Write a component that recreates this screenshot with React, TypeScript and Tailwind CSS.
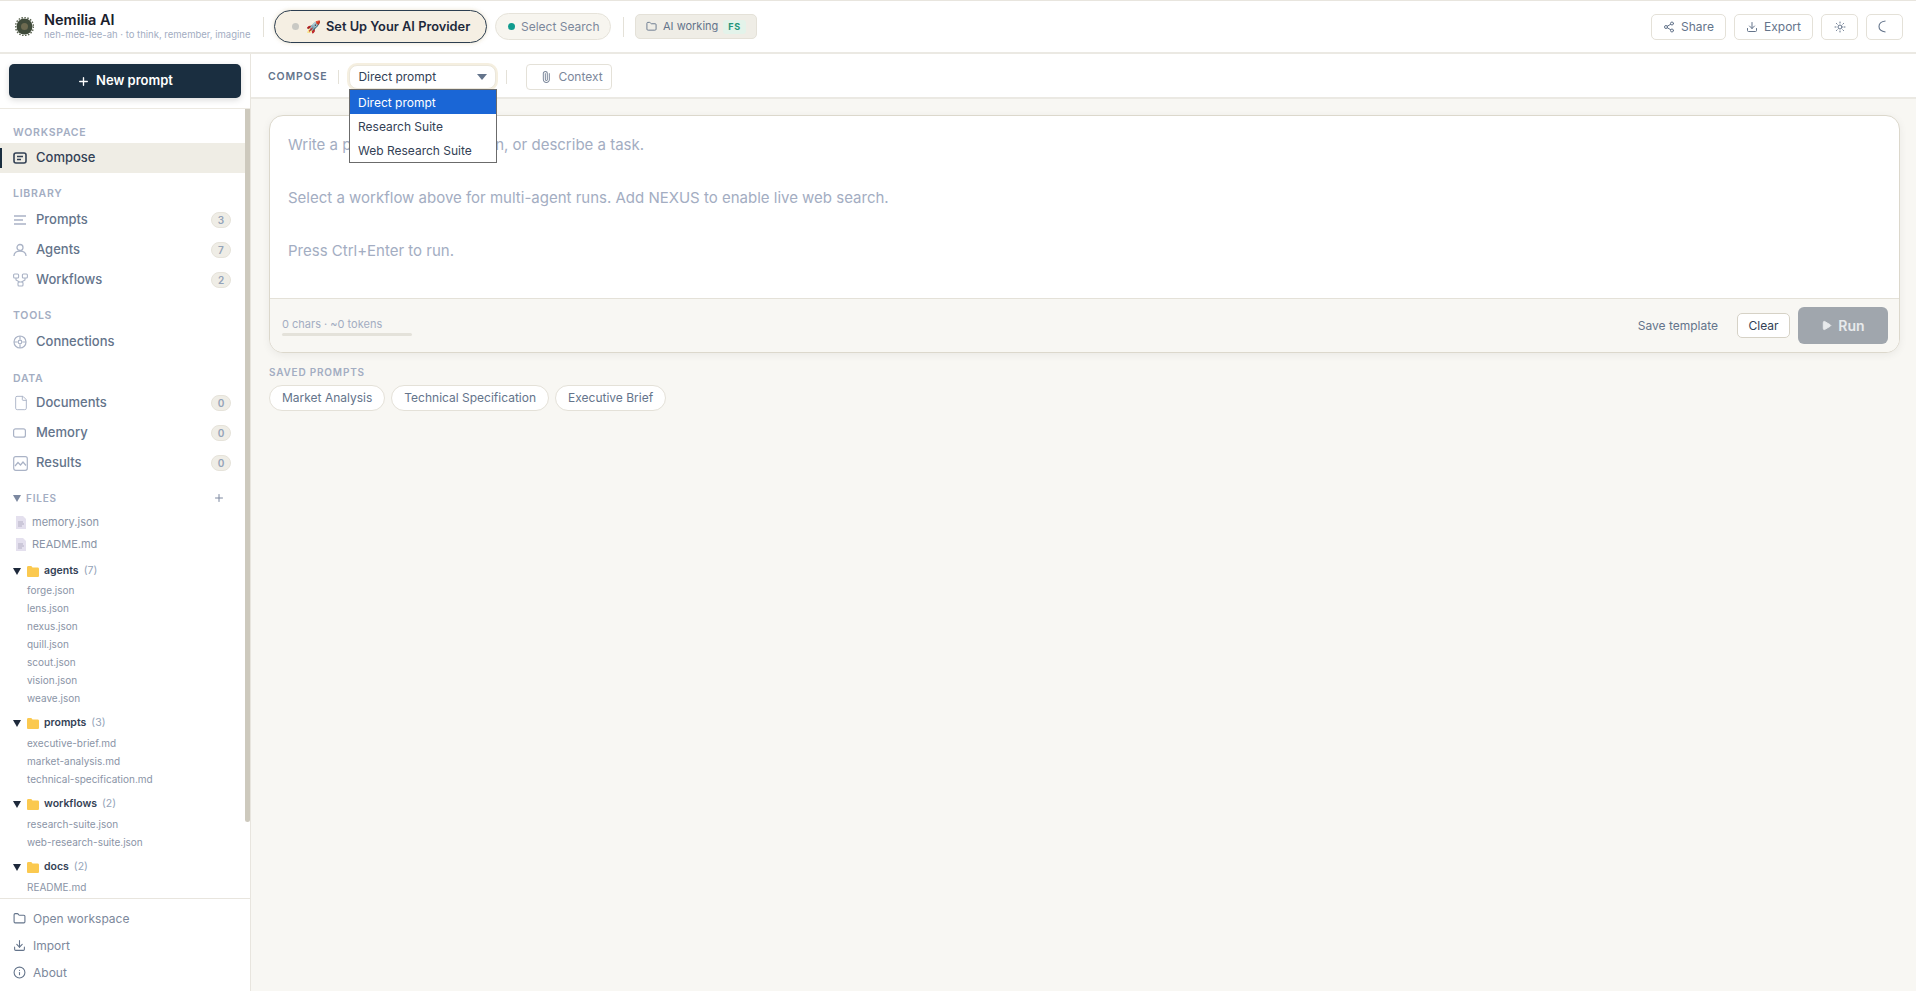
import React from "react";
import { Plus, Share2, Download, Sun, Folder, Paperclip, File, Info, Play } from "lucide-react";

const FONT = "font-['Inter','Noto_Sans',sans-serif]";

const SectionLabel: React.FC<{ text: string; className?: string }> = ({ text, className }) => (
  <div className={`px-[13px] text-[10.5px] leading-[14px] font-semibold tracking-[0.07em] text-[#a3adc2] ${className ?? ""}`}>
    {text}
  </div>
);

const NavRow: React.FC<{ icon: React.ReactNode; label: string; count?: number }> = ({ icon, label, count }) => (
  <div className="flex items-center h-[30px] pl-[13px] pr-[14px]">
    <span className="w-[23px] flex items-center text-[#aab3c6]">{icon}</span>
    <span className="text-[13px] font-medium text-[#64748b]">{label}</span>
    {count !== undefined && (
      <span className="ml-auto w-[20px] h-[16px] rounded-full bg-[#efede6] border border-[#e6e3da] flex items-center justify-center text-[10px] font-semibold text-[#94a3b8]">
        {count}
      </span>
    )}
  </div>
);

const PromptsIcon = () => (
  <svg width="14" height="12" viewBox="0 0 14 12" fill="none" stroke="currentColor" strokeWidth="1.5">
    <path d="M1 2h12M1 6h9M1 10h12" />
  </svg>
);

const AgentIcon = () => (
  <svg width="14" height="14" viewBox="0 0 14 14" fill="none" stroke="currentColor" strokeWidth="1.3">
    <circle cx="7" cy="4.500" r="3" />
    <path d="M1 13c0-3 2.500-5 6-5s6 2 6 5" />
  </svg>
);

const WorkflowIcon = () => (
  <svg width="15" height="14" viewBox="0 0 15 14" fill="none" stroke="currentColor" strokeWidth="1.100">
    <rect x="0.600" y="1" width="5" height="4" rx="1" />
    <rect x="9.400" y="1" width="5" height="4" rx="1" />
    <rect x="5" y="9" width="5" height="4" rx="1" />
    <path d="M3 5v2l3.500 2M12 5v2l-3.500 2" />
  </svg>
);

const MemoryIcon = () => (
  <svg width="13" height="10" viewBox="0 0 13 10" fill="none" stroke="currentColor" strokeWidth="1.200">
    <rect x="0.600" y="0.800" width="11.800" height="8.400" rx="2" />
  </svg>
);

const ResultsIcon = () => (
  <svg width="15" height="15" viewBox="0 0 15 15" fill="none" stroke="currentColor" strokeWidth="1.200">
    <rect x="0.700" y="0.700" width="13.600" height="13.600" rx="2" />
    <path d="M2 10l3-3.500 2.500 2.500 2.500-3 3 3.500" />
  </svg>
);

const FileIcon = () => (
  <svg width="10" height="13" viewBox="0 0 10 13" className="shrink-0">
    <path d="M0 0h7l3 3v10H0z" fill="#e4e0ee" />
    <path d="M2 6h5M2 8h6M2 10h4" stroke="#b4b0c4" strokeWidth="1" />
  </svg>
);

const FolderIcon = () => (
  <svg width="12" height="11" viewBox="0 0 12 11" className="shrink-0">
    <path d="M0 1.500C0 .7.500 0 1.300 0h3l1.200 1.500h5.200c.7 0 1.300.6 1.300 1.300v6.900c0 .7-.6 1.300-1.300 1.300H1.300C.5 11 0 10.400 0 9.700z" fill="#fbc94f" />
  </svg>
);

const FolderGroup: React.FC<{ name: string; count: number; files: string[]; className: string }> = ({ name, count, files, className }) => (
  <div className={className}>
    <div className="flex items-center h-[20px] pl-[13px]">
      <span className="w-0 h-0 border-l-[4px] border-r-[4px] border-t-[7px] border-l-transparent border-r-transparent border-t-[#1e293b]" />
      <span className="ml-[6px]"><FolderIcon /></span>
      <span className="ml-[5px] text-[10.5px] font-semibold text-[#334155]">{name}</span>
      <span className="ml-[5px] text-[10.5px] text-[#94a3b8]">({count})</span>
    </div>
    {files.map((f) => (
      <div key={f} className="h-[18px] pl-[27px] text-[10px] leading-[18px] text-[#8a94a6]">{f}</div>
    ))}
  </div>
);

const FooterRow: React.FC<{ icon: React.ReactNode; label: string }> = ({ icon, label }) => (
  <div className="flex items-center h-[27px] pl-[13px]">
    <span className="w-[20px] text-[#64748b]">{icon}</span>
    <span className="text-[12px] text-[#7c889b]">{label}</span>
  </div>
);

const Sidebar = () => (
  <aside className="w-[251px] shrink-0 bg-white border-r border-[#e8e5de] flex flex-col min-h-0">
    <div className="h-[55px] shrink-0 px-[9px] pt-[10px] border-b border-[#ece9e2]">
      <button className="w-full h-[34px] rounded-[5px] bg-[#1a2e40] text-white text-[13px] font-semibold flex items-center justify-center gap-[6px] shadow-[0_2px_6px_rgba(0,0,0,0.15)]">
        <Plus size={13} strokeWidth={2.5} />
        New prompt
      </button>
    </div>
    <div className="flex-1 min-h-0 overflow-hidden flex relative">
      <div className="flex-1 pt-[17px] pr-[5px]">
        <SectionLabel text="WORKSPACE" />
        <div className="mt-[3px] relative flex items-center h-[30px] pl-[13px] bg-[#efede5]">
          <span className="absolute left-0 top-[5px] bottom-[5px] w-[2px] bg-[#1a2e40]" />
          <span className="w-[23px] flex items-center text-[#334155]">
            <svg width="14" height="12" viewBox="0 0 14 12" fill="none" stroke="currentColor" strokeWidth="1.6">
              <rect x="1" y="1" width="12" height="10" rx="2" />
              <path d="M4 4.500h6M4 7.500h4" />
            </svg>
          </span>
          <span className="text-[13px] font-medium text-[#334155]">Compose</span>
        </div>
        <SectionLabel text="LIBRARY" className="mt-[14px]" />
        <div className="mt-[4px]">
          <NavRow icon={<PromptsIcon />} label="Prompts" count={3} />
          <NavRow icon={<AgentIcon />} label="Agents" count={7} />
          <NavRow icon={<WorkflowIcon />} label="Workflows" count={2} />
        </div>
        <SectionLabel text="TOOLS" className="mt-[14px]" />
        <div className="mt-[4px]">
          <NavRow
            icon={
              <svg width="14" height="14" viewBox="0 0 14 14" fill="none" stroke="currentColor" strokeWidth="1.2">
                <circle cx="7" cy="7" r="6" />
                <circle cx="7" cy="7" r="1.800" />
                <path d="M7 1v3.500M7 9.500V13M1 7h3.500M9.500 7H13" />
              </svg>
            }
            label="Connections"
          />
        </div>
        <SectionLabel text="DATA" className="mt-[15px]" />
        <div className="mt-[2px]">
          <NavRow icon={<File size={16} strokeWidth={1.4} />} label="Documents" count={0} />
          <NavRow icon={<MemoryIcon />} label="Memory" count={0} />
          <NavRow icon={<ResultsIcon />} label="Results" count={0} />
        </div>
        <div className="mt-[12px] flex items-center h-[16px] pl-[13px] pr-[20px]">
          <span className="w-0 h-0 border-l-[4px] border-r-[4px] border-t-[7px] border-l-transparent border-r-transparent border-t-[#7c88a0]" />
          <span className="ml-[5px] text-[10px] font-semibold tracking-[0.08em] text-[#a3adc2]">FILES</span>
          <Plus size={12} className="ml-auto text-[#7c88a0]" />
        </div>
        <div className="mt-[6px] flex items-center gap-[6px] h-[20px] pl-[16px] text-[11px] text-[#8a94a6]"><FileIcon />memory.json</div>
        <div className="mt-[2px] flex items-center gap-[6px] h-[20px] pl-[16px] text-[11px] text-[#8a94a6]"><FileIcon />README.md</div>
        <FolderGroup name="agents" count={7} className="mt-[7px]" files={["forge.json", "lens.json", "nexus.json", "quill.json", "scout.json", "vision.json", "weave.json"]} />
        <FolderGroup name="prompts" count={3} className="mt-[6px] [&>div:first-child]:mb-[1px]" files={["executive-brief.md", "market-analysis.md", "technical-specification.md"]} />
        <FolderGroup name="workflows" count={2} className="mt-[6px] [&>div:first-child]:mb-[1px]" files={["research-suite.json", "web-research-suite.json"]} />
        <FolderGroup name="docs" count={2} className="mt-[6px] [&>div:first-child]:mb-[1px]" files={["README.md"]} />
      </div>
      <div className="absolute right-0 top-0 w-[5px] h-[713px] bg-[#cdc9bd] rounded-b-[3px]" />
    </div>
    <div className="h-[93px] shrink-0 border-t border-[#e8e5de] pt-[6px]">
      <FooterRow icon={<Folder size={13} />} label="Open workspace" />
      <FooterRow icon={<Download size={13} />} label="Import" />
      <FooterRow icon={<Info size={13} />} label="About" />
    </div>
  </aside>
);

const TopButton: React.FC<{ children: React.ReactNode; className: string }> = ({ children, className }) => (
  <button className={`h-[26px] rounded-[5px] border border-[#e4e1d8] bg-white flex items-center justify-center text-[#64748b] text-[12px] ${className}`}>
    {children}
  </button>
);

const Header = () => (
  <header className="h-[54px] shrink-0 bg-white border-t border-t-[#e8e5de] border-b-2 border-b-[#ebe9e3] flex items-center pl-[15px] pr-[13px]">
    <svg width="19" height="19" viewBox="0 0 19 19" className="mr-[10px] shrink-0">
      <circle cx="9.500" cy="9.500" r="8" fill="#3f4a3a" />
      <circle cx="9.500" cy="9.500" r="9" fill="none" stroke="#5a6350" strokeWidth="1.500" strokeDasharray="1.500 1.500" />
      <circle cx="9.500" cy="9.500" r="3.500" fill="#6d6a50" />
    </svg>
    <div className="w-[219px] shrink-0 -mt-[1px]">
      <div className="text-[14.500px] leading-[17px] font-semibold text-[#1a202c]">Nemilia AI</div>
      <div className="text-[9.500px] leading-[13px] text-[#a3adc2] whitespace-nowrap">neh-mee-lee-ah · to think, remember, imagine</div>
    </div>
    <span className="w-px h-[20px] bg-[#e4e1d8] shrink-0" />
    <button className="ml-[10px] w-[213px] h-[33px] rounded-full bg-[#f5efe3] border border-[#2c3e50] shadow-[0_0_4px_rgba(200,180,130,0.4)] flex items-center pl-[17px] text-[12.800px] font-semibold text-[#1e293b] shrink-0">
      <span className="w-[7px] h-[7px] rounded-full bg-[#c9c9c4] mr-[7px]" />
      <span className="mr-[5px] text-[12px]">🚀</span>
      Set Up Your AI Provider
    </button>
    <button className="ml-[8px] w-[116px] h-[27px] rounded-full bg-[#f7f5ef] border border-[#e6e3da] flex items-center pl-[12px] text-[12px] text-[#7c889b] shrink-0">
      <span className="w-[7px] h-[7px] rounded-full bg-[#0f9b8e] mr-[6px]" />
      Select Search
    </button>
    <span className="w-px h-[20px] bg-[#e4e1d8] ml-[12px] shrink-0" />
    <button className="ml-[11px] w-[122px] h-[25px] rounded-[5px] bg-[#efede6] border border-[#e4e1d8] flex items-center pl-[10px] text-[11px] text-[#64748b] shrink-0">
      <Folder size={11} className="mr-[6px]" />
      AI working
      <span className="ml-[5px] px-[5px] h-[14px] leading-[14px] rounded-[3px] bg-[#e3f3ea] text-[#22957a] text-[9px] font-bold tracking-[0.08em]">FS</span>
    </button>
    <div className="ml-auto flex items-center">
      <TopButton className="w-[75px] gap-[6px]"><Share2 size={12} />Share</TopButton>
      <TopButton className="ml-[8px] w-[79px] gap-[6px]"><Download size={12} />Export</TopButton>
      <TopButton className="ml-[8px] w-[37px] h-[25px]"><Sun size={12} /></TopButton>
      <TopButton className="ml-[8px] w-[37px] h-[25px] justify-start pl-[11px]">
        <svg width="9" height="13" viewBox="0 0 9 13" fill="none" stroke="currentColor" strokeWidth="1.100">
          <path d="M7.500 1C3.500 1.500 1 3.500 1 6.500s2.500 5 6.500 5.500" />
        </svg>
      </TopButton>
    </div>
  </header>
);

const Toolbar = () => (
  <div className="h-[45px] shrink-0 bg-white border-b-2 border-b-[#ebe9e3] flex items-center pl-[17px] pt-[2px] relative">
    <span className="text-[10.500px] font-semibold tracking-[0.08em] text-[#64748b]">COMPOSE</span>
    <span className="w-px h-[14px] bg-[#e4e1d8] ml-[11px]" />
    <div className="ml-[10px] w-[147px] h-[24px] rounded-[8px] bg-white shadow-[0_0_0_2px_#f5efe0] flex items-center pl-[8px] pr-[8px] text-[12px] text-[#334155] border border-[#ebe7dc]">
      Direct prompt
      <span className="ml-auto w-0 h-0 border-l-[5px] border-r-[5px] border-t-[6px] border-l-transparent border-r-transparent border-t-[#64748b]" />
    </div>
    <span className="w-px h-[14px] bg-[#e4e1d8] ml-[10px]" />
    <button className="ml-[19px] w-[86px] h-[26px] rounded-[4px] border border-[#e4e1d8] flex items-center pl-[13px] gap-[6px] text-[12px] text-[#7c889b]">
      <Paperclip size={12} className="-rotate-45" />
      Context
    </button>
    <div className="absolute left-[98px] top-[35px] w-[148px] bg-white border border-[#6b6b6b] z-10 text-[12px] text-[#334155]">
      <div className="h-[24px] pl-[8px] pt-[1px] flex items-center bg-[#1a66d6] text-white">Direct prompt</div>
      <div className="h-[24px] pl-[8px] pt-[1px] flex items-center">Research Suite</div>
      <div className="h-[24px] pl-[8px] pt-[1px] flex items-center">Web Research Suite</div>
    </div>
  </div>
);

const Composer = () => (
  <div className="mt-[16px] ml-[18px] mr-[16px] h-[238px] rounded-[14px] border border-[#dcd8cc] bg-white overflow-hidden shadow-[0_2px_8px_rgba(0,0,0,0.06)] flex flex-col">
    <div className="h-[182px] px-[18px] pt-[16px] text-[15px] leading-[26.600px] text-[#a3adc2]">
      <div>Write a prompt, ask a question, or describe a task.</div>
      <div className="mt-[26px]">Select a workflow above for multi-agent runs. Add NEXUS to enable live web search.</div>
      <div className="mt-[27px]">Press Ctrl+Enter to run.</div>
    </div>
    <div className="flex-1 bg-[#f8f7f3] border-t border-[#e4e1d8] flex items-center pl-[12px] pr-[11px]">
      <div className="pt-[1px]">
        <div className="text-[11px] leading-[14px] text-[#a3adc2]">0 chars · ~0 tokens</div>
        <div className="mt-[2px] w-[130px] h-[3px] rounded-full bg-[#e4e2da]" />
      </div>
      <span className="ml-auto text-[12px] text-[#64748b]">Save template</span>
      <button className="ml-[19px] w-[53px] h-[25px] rounded-[5px] bg-white border border-[#d6d2c6] text-[12px] text-[#334155]">Clear</button>
      <button className="ml-[8px] w-[90px] h-[37px] rounded-[6px] bg-[#a0a6ad] flex items-center justify-center gap-[6px] text-[14px] font-semibold text-[#e8eaec]">
        <Play size={11} fill="currentColor" />
        Run
      </button>
    </div>
  </div>
);

const SavedPrompts = () => (
  <div className="mt-[12px] px-[18px]">
    <div className="text-[10px] leading-[14px] font-semibold tracking-[0.08em] text-[#a3adc2]">SAVED PROMPTS</div>
    <div className="mt-[6px] flex gap-[6px]">
      {["Market Analysis", "Technical Specification", "Executive Brief"].map((p) => (
        <span key={p} className="h-[26px] px-[12px] rounded-full bg-white border border-[#e4e1d8] flex items-center text-[12px] text-[#64748b]">{p}</span>
      ))}
    </div>
  </div>
);

export default function App() {
  return (
    <div className={`h-screen flex flex-col overflow-hidden bg-[#f8f7f3] ${FONT}`}>
      <Header />
      <div className="flex-1 min-h-0 flex">
        <Sidebar />
        <main className="flex-1 min-w-0 flex flex-col">
          <Toolbar />
          <Composer />
          <SavedPrompts />
        </main>
      </div>
    </div>
  );
}
